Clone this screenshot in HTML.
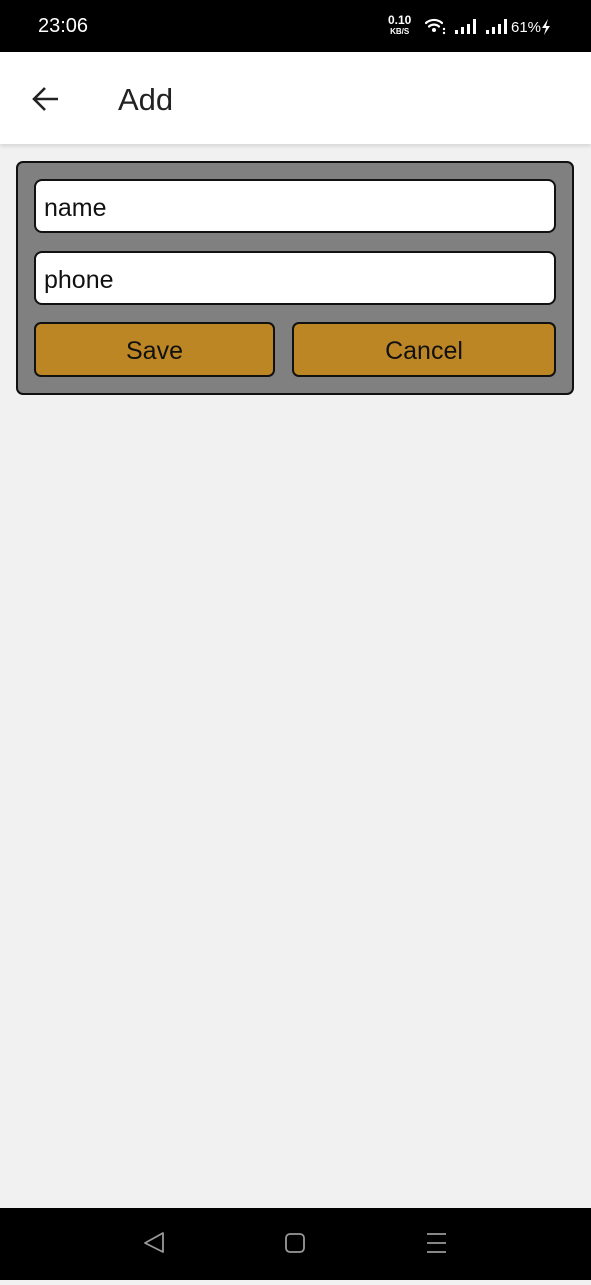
<!DOCTYPE html>
<html><head><meta charset="utf-8"><style>
*{margin:0;padding:0;box-sizing:border-box}
body{width:591px;height:1280px;background:#f1f1f1;font-family:"Liberation Sans",Roboto,sans-serif;position:relative;overflow:hidden}
.sb{position:absolute;top:0;left:0;width:591px;height:52px;background:#000;color:#fff}
.hd{position:absolute;top:52px;left:0;width:591px;height:92px;background:#fff;box-shadow:0 2px 4px rgba(0,0,0,.12)}
.panel{position:absolute;left:16px;top:161px;width:558px;height:234px;background:#808080;border:2px solid #111;border-radius:7px}
.in{position:absolute;left:16px;width:522px;height:54px;background:#fff;border:2px solid #111;border-radius:8px;font-size:25px;padding-left:8px;line-height:54px;color:#111}
.bt{position:absolute;top:159px;height:55px;background:#bd8625;border:2px solid #111;border-radius:7px;font-size:25px;text-align:center;line-height:55px;color:#111}
.nav{position:absolute;top:1208px;left:0;width:591px;height:72px;background:#000}
</style></head><body>
<div class="sb">
<div style="position:absolute;left:38px;top:15px;font-size:20px">23:06</div>
<div style="position:absolute;left:388px;top:15px;font-size:12px;font-weight:bold;line-height:10px;text-align:center">0.10<br><span style="font-size:8px">KB/S</span></div>
<svg style="position:absolute;left:424px;top:16px" width="130" height="20" viewBox="0 0 130 20">
<g fill="none" stroke="#fff" stroke-width="2.2" stroke-linecap="round"><path d="M2 7a12 12 0 0 1 16 0"/><path d="M5 10.5a7.5 7.5 0 0 1 10 0"/></g>
<circle cx="10" cy="14" r="2" fill="#fff"/><circle cx="20" cy="13" r="1.2" fill="#fff"/><circle cx="20" cy="17" r="1.2" fill="#fff"/>
<g fill="#fff"><rect x="31" y="14" width="3" height="4"/><rect x="37" y="11" width="3" height="7"/><rect x="43" y="8" width="3" height="10"/><rect x="49" y="3" width="3" height="15"/>
<rect x="62" y="14" width="3" height="4"/><rect x="68" y="11" width="3" height="7"/><rect x="74" y="8" width="3" height="10"/><rect x="80" y="3" width="3" height="15"/></g>
<text x="87" y="16" fill="#fff" font-size="15" font-family="Liberation Sans">61%</text>
<path d="M124 3l-6 9h4l-2 7 6-9h-4z" fill="#fff"/>
</svg>
</div>
<div class="hd">
<svg style="position:absolute;left:32px;top:34px" width="28" height="26" viewBox="0 0 28 26"><path d="M26 13H3M13 2L2 13l11 11" fill="none" stroke="#222" stroke-width="2.6"/></svg>
<div style="position:absolute;left:118px;top:30px;font-size:31px;color:#222;font-weight:500">Add</div>
</div>
<div class="panel">
<div class="in" style="top:16px">name</div>
<div class="in" style="top:88px">phone</div>
<div class="bt" style="left:16px;width:241px">Save</div>
<div class="bt" style="left:274px;width:264px">Cancel</div>
</div>
<div class="nav">
<svg width="591" height="72"><g fill="none" stroke="#999" stroke-width="1.8">
<path d="M163 25L145 35l18 9z" stroke-linejoin="round"/>
<rect x="286" y="26" width="18" height="18" rx="4"/>
<path d="M427 26h19M427 35h19M427 44h19"/></g></svg>
</div>
</body></html>
